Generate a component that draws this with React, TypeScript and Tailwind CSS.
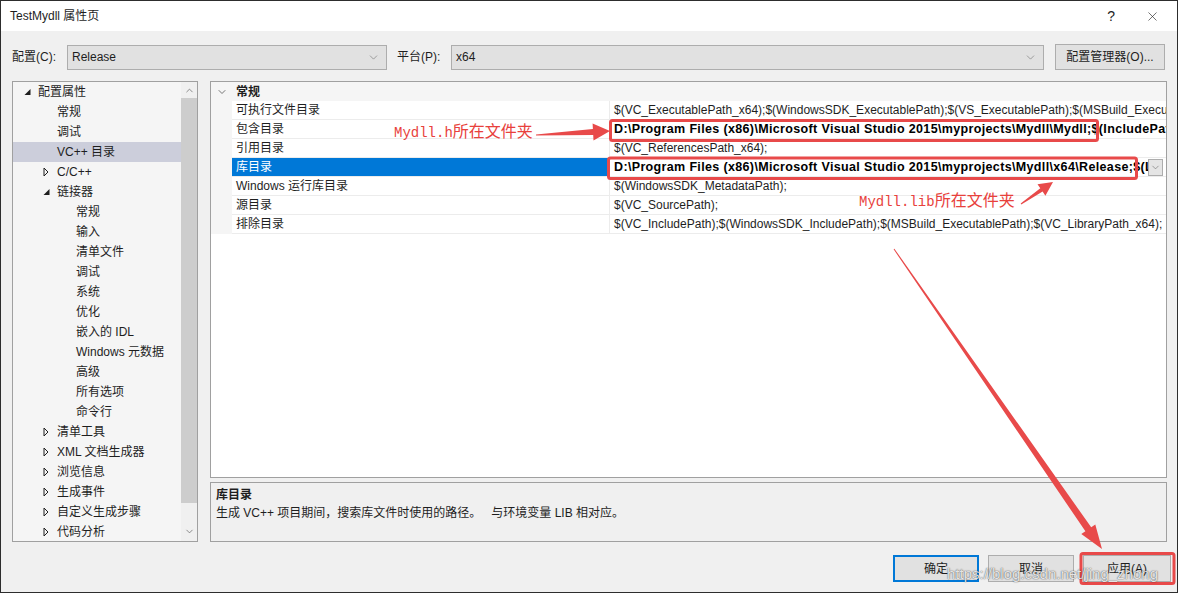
import { ChevronDown, ChevronUp, X } from "lucide-react";

type TreeItem = {
  label: string;
  level: 0 | 1 | 2;
  caret?: "open" | "closed";
  selected?: boolean;
};

const treeItems: TreeItem[] = [
  { label: "配置属性", level: 0, caret: "open" },
  { label: "常规", level: 1 },
  { label: "调试", level: 1 },
  { label: "VC++ 目录", level: 1, selected: true },
  { label: "C/C++", level: 1, caret: "closed" },
  { label: "链接器", level: 1, caret: "open" },
  { label: "常规", level: 2 },
  { label: "输入", level: 2 },
  { label: "清单文件", level: 2 },
  { label: "调试", level: 2 },
  { label: "系统", level: 2 },
  { label: "优化", level: 2 },
  { label: "嵌入的 IDL", level: 2 },
  { label: "Windows 元数据", level: 2 },
  { label: "高级", level: 2 },
  { label: "所有选项", level: 2 },
  { label: "命令行", level: 2 },
  { label: "清单工具", level: 1, caret: "closed" },
  { label: "XML 文档生成器", level: 1, caret: "closed" },
  { label: "浏览信息", level: 1, caret: "closed" },
  { label: "生成事件", level: 1, caret: "closed" },
  { label: "自定义生成步骤", level: 1, caret: "closed" },
  { label: "代码分析", level: 1, caret: "closed" },
];

const indent = { 0: "pl-[11px]", 1: "pl-[30px]", 2: "pl-[63px]" };

const props = [
  {
    name: "可执行文件目录",
    value:
      "$(VC_ExecutablePath_x64);$(WindowsSDK_ExecutablePath);$(VS_ExecutablePath);$(MSBuild_ExecutablePath);$(SystemRoot)\\SysWow64;$(FxCopDir);$(PATH);",
  },
  {
    name: "包含目录",
    value:
      "D:\\Program Files (x86)\\Microsoft Visual Studio 2015\\myprojects\\Mydll\\Mydll;$(IncludePath)",
    bold: true,
  },
  { name: "引用目录", value: "$(VC_ReferencesPath_x64);" },
  {
    name: "库目录",
    value:
      "D:\\Program Files (x86)\\Microsoft Visual Studio 2015\\myprojects\\Mydll\\x64\\Release;$(LibraryPath)",
    bold: true,
    selected: true,
  },
  { name: "Windows 运行库目录", value: "$(WindowsSDK_MetadataPath);" },
  { name: "源目录", value: "$(VC_SourcePath);" },
  {
    name: "排除目录",
    value:
      "$(VC_IncludePath);$(WindowsSDK_IncludePath);$(MSBuild_ExecutablePath);$(VC_LibraryPath_x64);",
  },
];

const Caret = ({ kind }: { kind?: "open" | "closed" }) => {
  if (!kind) return <span className="w-[14px] shrink-0" />;
  return (
    <svg width="14" height="20" viewBox="0 0 14 20" className="shrink-0">
      {kind === "open" ? (
        <path d="M6.5 7 L6.5 13 L0.5 13 Z" fill="#1e1e1e" />
      ) : (
        <path
          d="M1 6 L5 10 L1 14 Z"
          fill="none"
          stroke="#1e1e1e"
          strokeWidth="1"
        />
      )}
    </svg>
  );
};

const ComboBox = ({ value, width }: { value: string; width: string }) => (
  <div
    className={`${width} h-[25px] flex items-center justify-between bg-[#e1e1e1] border border-[#adadad] pl-[4px] pr-[6px]`}
  >
    <span>{value}</span>
    <ChevronDown size={13} strokeWidth={1} className="text-[#606060]" />
  </div>
);

// tapered annotation arrow: thin tail widening into a solid head
function arrowPoints(
  x1: number,
  y1: number,
  x2: number,
  y2: number,
  tail: number,
  shaft: number,
  headLen: number,
  headW: number
) {
  const dx = x2 - x1;
  const dy = y2 - y1;
  const len = Math.hypot(dx, dy);
  const ux = dx / len;
  const uy = dy / len;
  const nx = -uy;
  const ny = ux;
  const bx = x2 - ux * headLen;
  const by = y2 - uy * headLen;
  const pts = [
    [x1 + (nx * tail) / 2, y1 + (ny * tail) / 2],
    [bx + (nx * shaft) / 2, by + (ny * shaft) / 2],
    [bx + (nx * headW) / 2, by + (ny * headW) / 2],
    [x2, y2],
    [bx - (nx * headW) / 2, by - (ny * headW) / 2],
    [bx - (nx * shaft) / 2, by - (ny * shaft) / 2],
    [x1 - (nx * tail) / 2, y1 - (ny * tail) / 2],
  ];
  return pts.map((p) => p.map((v) => v.toFixed(1)).join(",")).join(" ");
}

const Annotations = () => (
  <>
    <svg
      className="absolute inset-0 pointer-events-none"
      width="1178"
      height="593"
      viewBox="0 0 1178 593"
    >
      <g fill="none" stroke="#e84a4a" strokeWidth="3">
        <rect x="609.5" y="119.5" width="487" height="20" rx="2" />
        <rect x="607.5" y="157" width="528" height="20.5" rx="2" />
        <rect x="1080" y="552.5" width="93" height="30" rx="2" />
      </g>
      <g fill="#e84a4a">
        <polygon points={arrowPoints(535, 134, 609, 130, 1, 6, 17, 17)} />
        <polygon points={arrowPoints(1020, 203, 1052, 181, 1, 4, 14, 14)} />
        <polygon points={arrowPoints(893, 248, 1101, 548, 1, 7, 24, 17)} />
      </g>
    </svg>
    <div className="absolute left-[393px] top-[121px] leading-[20px] text-[#e8413c] whitespace-nowrap">
      <span className="font-['Liberation_Mono',monospace] text-[14px]">Mydll.h</span>
      <span className="text-[16px]">所在文件夹</span>
    </div>
    <div className="absolute left-[858px] top-[190px] leading-[20px] text-[#e8413c] whitespace-nowrap">
      <span className="font-['Liberation_Mono',monospace] text-[14px]">Mydll.lib</span>
      <span className="text-[16px]">所在文件夹</span>
    </div>
    <div className="absolute left-[946px] top-[563px] text-[15px] leading-[20px] text-white/85 [text-shadow:0_0_1px_rgba(0,0,0,0.7),0_0_2px_rgba(0,0,0,0.3)] font-['Liberation_Sans',sans-serif] whitespace-nowrap pointer-events-none">
      https://blog.csdn.net/jing_zhong
    </div>
  </>
);

export default function App() {
  return (
    <div className="relative w-[1178px] h-[593px] border border-[#2d2d2d] bg-[#f0f0f0] text-[12px] text-[#1e1e1e] font-['Liberation_Sans','Noto_Sans_CJK_SC',sans-serif] flex flex-col overflow-hidden">
      {/* title bar */}
      <div className="h-[30px] bg-white flex items-center justify-between pl-[9px] pr-[17px] shrink-0">
        <span className="text-[12px]">TestMydll 属性页</span>
        <div className="flex items-center gap-[30px] text-[#1e1e1e]">
          <span className="text-[14px] font-light">?</span>
          <X size={15} strokeWidth={1} />
        </div>
      </div>

      {/* configuration row */}
      <div className="mt-[13px] h-[26px] flex items-center shrink-0">
        <span className="ml-[11px] w-[55px]">配置(C):</span>
        <ComboBox value="Release" width="w-[320px]" />
        <span className="ml-[10px] w-[54px]">平台(P):</span>
        <ComboBox value="x64" width="w-[593px]" />
        <div className="ml-[11px] w-[110px] h-[26px] flex items-center justify-center bg-[#e1e1e1] border border-[#adadad]">
          配置管理器(O)...
        </div>
      </div>

      <div className="mt-[11px] flex shrink-0">
        {/* property tree */}
        <div className="ml-[11px] w-[186px] h-[461px] border border-[#a0a0a0] bg-[#f5f5f5] flex">
          <div className="flex-1 overflow-hidden">
            {treeItems.map((item, i) => (
              <div
                key={i}
                className={`h-[20px] flex items-center whitespace-nowrap ${indent[item.level]} ${
                  item.selected ? "bg-[#cccedb]" : ""
                }`}
              >
                {item.level < 2 && <Caret kind={item.caret} />}
                <span>{item.label}</span>
              </div>
            ))}
          </div>
          <div className="w-[16px] bg-[#f0f0f0] flex flex-col items-center">
            <div className="h-[16px] flex items-center justify-center">
              <ChevronUp size={11} strokeWidth={1.5} className="text-[#606060]" />
            </div>
            <div className="w-full h-[405px] bg-[#cdcdcd]" />
            <div className="flex-1 flex items-end justify-center pb-[4px]">
              <ChevronDown size={11} strokeWidth={1.5} className="text-[#606060]" />
            </div>
          </div>
        </div>

        <div className="ml-[12px] w-[957px] flex flex-col">
          {/* property grid */}
          <div className="h-[397px] border border-[#a0a0a0] bg-white overflow-hidden">
            <div className="h-[19px] flex items-center bg-[#f5f5f5]">
              <div className="w-[21px] flex justify-center">
                <ChevronDown size={12} strokeWidth={1.6} className="text-[#555]" />
              </div>
              <span className="pl-[4px] font-bold">常规</span>
            </div>
            {props.map((p) => (
              <div key={p.name} className="h-[19px] flex">
                <div className="w-[21px] bg-[#f5f5f5] shrink-0" />
                <div
                  className={`w-[378px] shrink-0 pl-[4px] leading-[18px] border-b border-r border-[#ececec] whitespace-nowrap ${
                    p.selected ? "bg-[#0078d7] text-white" : ""
                  }`}
                >
                  {p.name}
                </div>
                <div className="flex-1 min-w-0 flex items-center border-b border-[#ececec]">
                  <span
                    className={`flex-1 min-w-0 pl-[4px] leading-[18px] whitespace-nowrap overflow-hidden ${
                      p.bold ? "font-bold text-black text-[12.5px] tracking-[0.35px]" : ""
                    }`}
                  >
                    {p.value}
                  </span>
                  {p.selected && (
                    <div className="w-[15px] h-[17px] mr-[3px] shrink-0 bg-[#e5e5e5] border border-[#adadad] flex items-center justify-center">
                      <ChevronDown size={11} strokeWidth={1.2} className="text-[#606060]" />
                    </div>
                  )}
                </div>
              </div>
            ))}
          </div>

          {/* description */}
          <div className="mt-[4px] h-[60px] border border-[#a0a0a0] bg-[#f0f0f0] pl-[5px] pt-[3px] leading-[18px]">
            <div className="font-bold">库目录</div>
            <div>生成 VC++ 项目期间，搜索库文件时使用的路径。&nbsp;&nbsp;&nbsp;与环境变量 LIB 相对应。</div>
          </div>
        </div>
      </div>

      {/* dialog buttons */}
      <div className="mt-[13px] flex justify-end gap-[9px] pr-[6px]">
        <div className="w-[86px] h-[27px] flex items-center justify-center bg-[#e1e1e1] border-2 border-[#0078d7]">
          确定
        </div>
        <div className="w-[86px] h-[27px] flex items-center justify-center bg-[#e1e1e1] border border-[#adadad]">
          取消
        </div>
        <div className="w-[88px] h-[27px] flex items-center justify-center bg-[#e1e1e1] border border-[#adadad]">
          应用(A)
        </div>
      </div>

      <Annotations />
    </div>
  );
}
